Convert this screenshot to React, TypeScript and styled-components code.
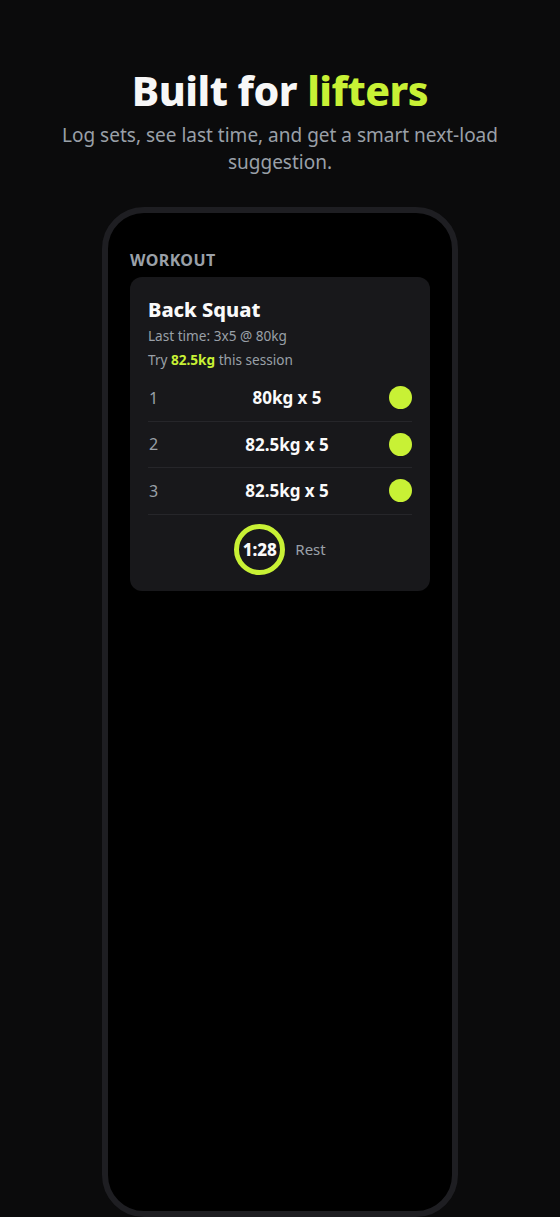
import React from "react";
import styled, { createGlobalStyle } from "styled-components";

const LIME = "#c8f135";

const Global = createGlobalStyle`
  html, body {
    margin: 0;
    padding: 0;
    background: #0b0b0c;
  }
  body {
    font-family: "Noto Sans", "Open Sans", sans-serif;
    color: #f5f5f5;
  }
`;

const Page = styled.div`
  height: 1217px;
  overflow: hidden;
  display: flex;
  flex-direction: column;
  align-items: center;
  padding-top: 64px;
  box-sizing: border-box;
`;

const Title = styled.h1`
  margin: 0;
  font-size: 41px;
  font-weight: 800;
  line-height: 52px;
  letter-spacing: -0.5px;
  color: #f7f7f7;
`;

const Accent = styled.span`
  color: ${LIME};
`;

const Sub = styled.p`
  margin: 6px 0 0;
  max-width: 450px;
  text-align: center;
  font-size: 19px;
  line-height: 27px;
  color: #9aa0a8;
`;

const Phone = styled.div`
  margin-top: 31px;
  width: 356px;
  height: 1010px;
  flex-shrink: 0;
  box-sizing: border-box;
  border: 6px solid #1e1e22;
  border-radius: 42px;
  background: #000;
  padding: 37px 22px 0;
`;

const Label = styled.div`
  font-size: 16px;
  line-height: 20px;
  font-weight: 700;
  letter-spacing: 0.4px;
  color: #9aa0a8;
  margin-bottom: 7px;
`;

const Card = styled.div`
  background: #18181b;
  border-radius: 12px;
  padding: 20px 18px 16px;
`;

const Exercise = styled.div`
  font-size: 20px;
  line-height: 26px;
  font-weight: 800;
  color: #fafafa;
`;

const Meta = styled.div<{ $gap?: number }>`
  margin-top: ${(p) => p.$gap ?? 0}px;
  font-size: 13.6px;
  line-height: 20px;
  color: #9aa0a8;
`;

const Strong = styled.b`
  color: ${LIME};
  font-weight: 700;
`;

const Sets = styled.div`
  margin-top: 5px;
`;

const Row = styled.div`
  display: grid;
  grid-template-columns: 40px 1fr 26px;
  align-items: center;
  height: 46.5px;
  box-sizing: border-box;
  border-bottom: 1px solid #26262a;
`;

const SetNo = styled.span`
  font-size: 16px;
  color: #9aa0a8;
  padding-left: 1px;
`;

const Load = styled.span`
  text-align: center;
  font-size: 17px;
  font-weight: 700;
  color: #fafafa;
`;

const Done = styled.span`
  justify-self: end;
  width: 23px;
  height: 23px;
  border-radius: 50%;
  background: ${LIME};
`;

const Timer = styled.div`
  display: flex;
  justify-content: center;
  align-items: center;
  gap: 10px;
  padding-top: 9px;
`;

const Ring = styled.div`
  width: 51px;
  height: 51px;
  box-sizing: border-box;
  border: 5px solid ${LIME};
  border-radius: 50%;
  display: flex;
  align-items: center;
  justify-content: center;
  font-size: 17px;
  font-weight: 800;
  color: #fafafa;
`;

const RestText = styled.span`
  font-size: 15px;
  color: #9aa0a8;
`;

const sets = [
  { n: 1, load: "80kg x 5" },
  { n: 2, load: "82.5kg x 5" },
  { n: 3, load: "82.5kg x 5" },
];

export default function App() {
  return (
    <>
      <Global />
      <Page>
        <Title>
          Built for <Accent>lifters</Accent>
        </Title>
        <Sub>Log sets, see last time, and get a smart next-load suggestion.</Sub>
        <Phone>
          <Label>WORKOUT</Label>
          <Card>
            <Exercise>Back Squat</Exercise>
            <Meta $gap={3}>Last time: 3x5 @ 80kg</Meta>
            <Meta $gap={4}>
              Try <Strong>82.5kg</Strong> this session
            </Meta>
            <Sets>
              {sets.map((s) => (
                <Row key={s.n}>
                  <SetNo>{s.n}</SetNo>
                  <Load>{s.load}</Load>
                  <Done />
                </Row>
              ))}
            </Sets>
            <Timer>
              <Ring>1:28</Ring>
              <RestText>Rest</RestText>
            </Timer>
          </Card>
        </Phone>
      </Page>
    </>
  );
}
